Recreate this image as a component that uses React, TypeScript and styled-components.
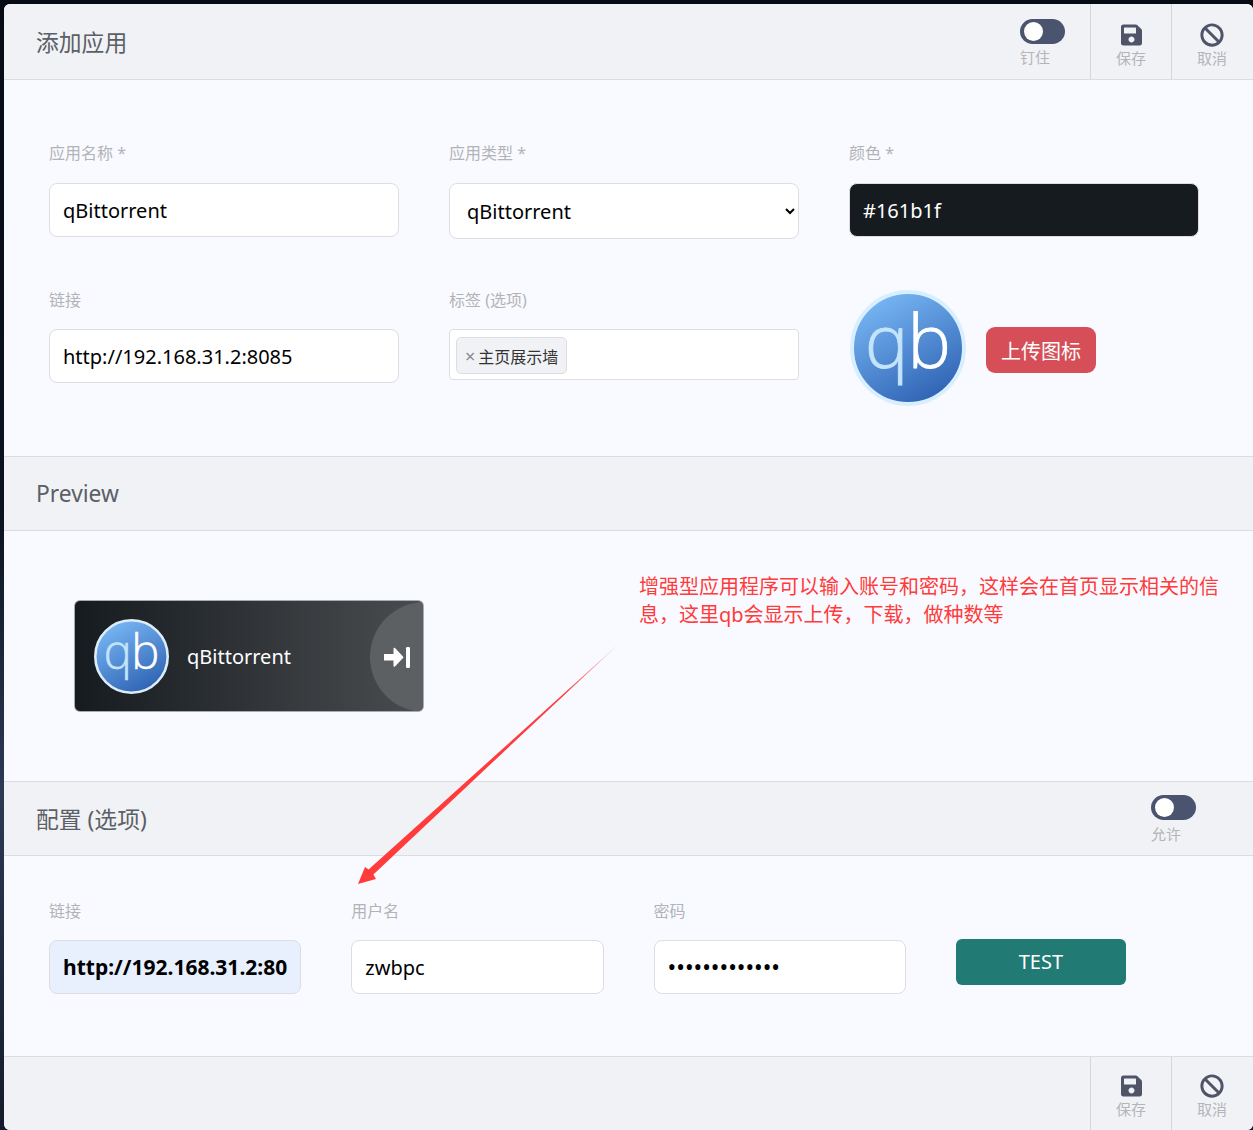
import React from 'react'
import styled, { createGlobalStyle } from 'styled-components'
import { FaBan, FaSave } from 'react-icons/fa'

const GlobalStyle = createGlobalStyle`
    html, body {
        margin: 0;
        height: 1130px;
        overflow: hidden;
        background: linear-gradient(180deg, #070b14 0%, #0b1220 45%, #2c3a55 70%, #141b2b 100%);
    }
    * {
        box-sizing: border-box;
    }
    body, input, select, button {
        font-family: "Noto Sans", "Noto Sans CJK SC", sans-serif;
    }
`

const Page = styled.div`
    padding: 4px 0 0 4px;
    height: 1130px;
`

const Modal = styled.div`
    position: relative;
    width: 1249px;
    height: 1126px;
    display: flex;
    flex-direction: column;
    background: #f9faff;
    border-radius: 6px;
    overflow: hidden;
`

const Bar = styled.header`
    flex: none;
    height: 76px;
    padding-right: 1px;
    display: flex;
    align-items: stretch;
    justify-content: space-between;
    background: #f1f2f6;
    border-bottom: 1px solid #dcdde3;
`

const SectionBar = styled(Bar)`
    height: 75px;
    border-top: 1px solid #dcdde3;
`

const FooterBar = styled(Bar)`
    height: 74px;
    border-top: 1px solid #dcdde3;
    border-bottom: 0;
    justify-content: flex-end;
`

const Title = styled.h2`
    margin: 0;
    padding: 0 0 1px 32px;
    align-self: center;
    font-size: 22.8px;
    font-weight: 400;
    color: #5b5f66;
`

const Actions = styled.div`
    display: flex;
    align-items: stretch;
`

const ToggleBlock = styled.div<{ $gap: number; $top: number; $space: number }>`
    display: flex;
    flex-direction: column;
    align-items: flex-start;
    justify-content: flex-start;
    gap: ${p => p.$space}px;
    padding-top: ${p => p.$top}px;
    margin-right: ${p => p.$gap}px;
`

const Toggle = styled.span`
    position: relative;
    display: block;
    width: 45px;
    height: 25px;
    border-radius: 13px;
    background: #4a546f;

    &::after {
        content: '';
        position: absolute;
        left: 4px;
        top: 3px;
        width: 19px;
        height: 19px;
        border-radius: 50%;
        background: #fff;
    }
`

const SmallLabel = styled.span`
    font-size: 15px;
    line-height: 20px;
    color: #b4b5b9;
`

const ActionButton = styled.button`
    width: 81px;
    padding: 0;
    display: flex;
    flex-direction: column;
    align-items: center;
    justify-content: flex-start;
    background: transparent;
    border: 0;
    border-left: 1px solid #d5d6dc;

    svg {
        display: block;
        height: 24px;
        color: #4f5468;
    }
`

const IconSlot = styled.span<{ $top: number }>`
    height: 24px;
    margin: ${p => p.$top}px 0 1px;
    display: flex;
    align-items: center;
`

const FormBody = styled.section`
    flex: none;
    height: 376px;
    padding: 60px 0 0 45px;
    display: grid;
    grid-template-columns: repeat(3, 350px);
    grid-template-rows: 146px 1fr;
    column-gap: 50px;
`

const Field = styled.div`
    display: flex;
    flex-direction: column;
    align-items: stretch;
`

const FieldLabel = styled.label<{ $low?: boolean }>`
    height: 43px;
    font-size: 16px;
    line-height: ${p => (p.$low ? 28 : 26)}px;
    color: #b2b3b8;
`

const Input = styled.input<{ $filled?: boolean }>`
    width: 100%;
    height: 54px;
    padding: 0 13px;
    font-size: ${p => (p.$filled ? 21 : 20)}px;
    font-weight: ${p => (p.$filled ? 700 : 400)};
    color: #000;
    background: ${p => (p.$filled ? '#e8f0fe' : '#fff')};
    border: 1px solid #dddde3;
    border-radius: 8px;
    outline: 0;

    &[type='password'] {
        font-size: 23px;
    }
`

const ColorInput = styled(Input)`
    color: #fff;
    background: #161b1f;
`

const Select = styled.select`
    width: 100%;
    height: 56px;
    padding: 0 16px 0 13px;
    font-size: 20px;
    color: #000;
    background: #fff;
    border: 1px solid #dddde3;
    border-radius: 8px;
    outline: 0;
`

const TagBox = styled.div`
    height: 51px;
    padding: 7px 6px;
    background: #fff;
    border: 1px solid #dddde3;
    border-radius: 4px;
`

const Tag = styled.span`
    height: 37px;
    width: 111px;
    display: flex;
    align-items: center;
    gap: 3px;
    padding-left: 8px;
    font-size: 16px;
    color: #333;
    background: #f1f2f6;
    border: 1px solid #dddde3;
    border-radius: 5px;
`

const TagClose = styled.span`
    font-size: 18px;
    line-height: 1;
    color: #888;
`

const IconRow = styled.div`
    display: flex;
    align-items: center;
    gap: 20px;
    margin: 4px 0 0 1px;
    height: 116px;
`

const UploadButton = styled.button`
    margin-top: 4px;
    width: 110px;
    height: 46px;
    padding: 0;
    font-size: 20px;
    color: #fff;
    background: #d64f58;
    border: 0;
    border-radius: 9px;
`

const PreviewBody = styled.section`
    flex: none;
    height: 250px;
    display: flex;
    align-items: flex-start;
    padding-left: 70px;
`

const PreviewCard = styled.div`
    position: relative;
    margin-top: 69px;
    flex: none;
    width: 350px;
    height: 112px;
    display: flex;
    align-items: center;
    gap: 18px;
    padding-left: 19px;
    overflow: hidden;
    color: #fff;
    font-size: 20px;
    background: linear-gradient(90deg, #161b1f 0%, #4a4d50 100%);
    border: 1px solid #a9abae;
    border-radius: 6px;
`

const CardGo = styled.span`
    position: absolute;
    left: 295px;
    top: 1px;
    width: 110px;
    height: 110px;
    padding: 45px 0 0 14px;
    border-radius: 50%;
    background: #5d6063;

    svg {
        display: block;
    }
`

const Note = styled.p`
    margin: 42px 0 0 215px;
    width: 590px;
    font-size: 20px;
    line-height: 28px;
    color: #ff3b3b;
`

const ConfigBody = styled.section`
    flex: none;
    height: 200px;
    padding: 41px 0 0 45px;
    display: grid;
    grid-template-columns: repeat(3, 252.3px) 170px;
    column-gap: 50px;
    align-items: start;
`

const TestButton = styled.button`
    margin-top: 42px;
    height: 46px;
    padding: 0 0 2px;
    font-size: 20px;
    color: #fff;
    background: #217a74;
    border: 0;
    border-radius: 6px;
`

const ArrowOverlay = styled.svg`
    position: absolute;
    left: 346px;
    top: 630px;
    pointer-events: none;
`

const QbLogo = ({ size, ring, id }: { size: number; ring: string; id: string }) => (
    <svg width={size} height={size} viewBox="0 0 116 116">
        <defs>
            <linearGradient id={id} x1="0.2" y1="0" x2="0.75" y2="1">
                <stop offset="0" stopColor="#7bbaf7" />
                <stop offset="1" stopColor="#2c60b1" />
            </linearGradient>
        </defs>
        <circle cx="58" cy="58" r="56" fill={`url(#${id})`} stroke={ring} strokeWidth="4" />
        <text
            x="15"
            y="78"
            fontFamily="'Open Sans', 'Noto Sans', sans-serif"
            fontWeight="300"
            fontSize="73"
            letterSpacing="-1"
            fill="#c4e4fb"
            stroke="#c4e4fb"
            strokeWidth="0.8">
            q
            <tspan fill="#fff" stroke="#fff">b</tspan>
        </text>
    </svg>
)

const GoIcon = () => (
    <svg width="26" height="21" viewBox="0 0 26 21" fill="#fff">
        <path d="M0 7h9.5V1.7c0-.8.9-1.2 1.5-.6l8 8.3c.5.5.5 1.2 0 1.7l-8 8.3c-.6.6-1.5.2-1.5-.6V13.5H0z" />
        <rect x="22" y="0" width="4" height="21" rx="1.2" />
    </svg>
)

const App = () => {
    const noop = () => undefined

    return (
        <Page>
            <GlobalStyle />
            <Modal>
                <Bar>
                    <Title>添加应用</Title>
                    <Actions>
                        <ToggleBlock $gap={25} $top={15} $space={3}>
                            <Toggle />
                            <SmallLabel>钉住</SmallLabel>
                        </ToggleBlock>
                        <ActionButton>
                            <IconSlot $top={19}><FaSave size={21} /></IconSlot>
                            <SmallLabel>保存</SmallLabel>
                        </ActionButton>
                        <ActionButton>
                            <IconSlot $top={19}><FaBan size={24} /></IconSlot>
                            <SmallLabel>取消</SmallLabel>
                        </ActionButton>
                    </Actions>
                </Bar>

                <FormBody>
                    <Field>
                        <FieldLabel>应用名称 *</FieldLabel>
                        <Input value="qBittorrent" onChange={noop} />
                    </Field>
                    <Field>
                        <FieldLabel>应用类型 *</FieldLabel>
                        <Select value="qBittorrent" onChange={noop}>
                            <option>qBittorrent</option>
                        </Select>
                    </Field>
                    <Field>
                        <FieldLabel>颜色 *</FieldLabel>
                        <ColorInput value="#161b1f" onChange={noop} />
                    </Field>
                    <Field>
                        <FieldLabel $low>链接</FieldLabel>
                        <Input value="http://192.168.31.2:8085" onChange={noop} />
                    </Field>
                    <Field>
                        <FieldLabel $low>标签 (选项)</FieldLabel>
                        <TagBox>
                            <Tag><TagClose>×</TagClose>主页展示墙</Tag>
                        </TagBox>
                    </Field>
                    <IconRow>
                        <QbLogo size={116} ring="#d8efff" id="qb-large" />
                        <UploadButton>上传图标</UploadButton>
                    </IconRow>
                </FormBody>

                <SectionBar>
                    <Title>Preview</Title>
                </SectionBar>

                <PreviewBody>
                    <PreviewCard>
                        <QbLogo size={75} ring="#dcecf8" id="qb-small" />
                        qBittorrent
                        <CardGo><GoIcon /></CardGo>
                    </PreviewCard>
                    <Note>增强型应用程序可以输入账号和密码，这样会在首页显示相关的信息，这里qb会显示上传，下载，做种数等</Note>
                </PreviewBody>

                <SectionBar>
                    <Title>配置 (选项)</Title>
                    <ToggleBlock $gap={56} $top={13} $space={4}>
                        <Toggle />
                        <SmallLabel>允许</SmallLabel>
                    </ToggleBlock>
                </SectionBar>

                <ConfigBody>
                    <Field>
                        <FieldLabel $low>链接</FieldLabel>
                        <Input $filled value="http://192.168.31.2:8085" onChange={noop} />
                    </Field>
                    <Field>
                        <FieldLabel $low>用户名</FieldLabel>
                        <Input value="zwbpc" onChange={noop} />
                    </Field>
                    <Field>
                        <FieldLabel $low>密码</FieldLabel>
                        <Input type="password" value="zwbpc12345678" onChange={noop} />
                    </Field>
                    <TestButton>TEST</TestButton>
                </ConfigBody>

                <FooterBar>
                    <ActionButton>
                        <IconSlot $top={17}><FaSave size={21} /></IconSlot>
                        <SmallLabel>保存</SmallLabel>
                    </ActionButton>
                    <ActionButton>
                        <IconSlot $top={17}><FaBan size={24} /></IconSlot>
                        <SmallLabel>取消</SmallLabel>
                    </ActionButton>
                </FooterBar>

                <ArrowOverlay width="280" height="260" viewBox="350 634 280 260">
                    <defs>
                        <linearGradient id="arrow-fade" gradientUnits="userSpaceOnUse" x1="623" y1="640" x2="565" y2="694">
                            <stop offset="0" stopColor="#ff3b3b" stopOpacity="0.15" />
                            <stop offset="1" stopColor="#ff3b3b" />
                        </linearGradient>
                    </defs>
                    <polygon
                        points="623,640 498,757.2 373.4,874.6 376,879 358,884 365,867 368.6,869.4 496,754.8"
                        fill="url(#arrow-fade)"
                    />
                </ArrowOverlay>
            </Modal>
        </Page>
    )
}

export default App
